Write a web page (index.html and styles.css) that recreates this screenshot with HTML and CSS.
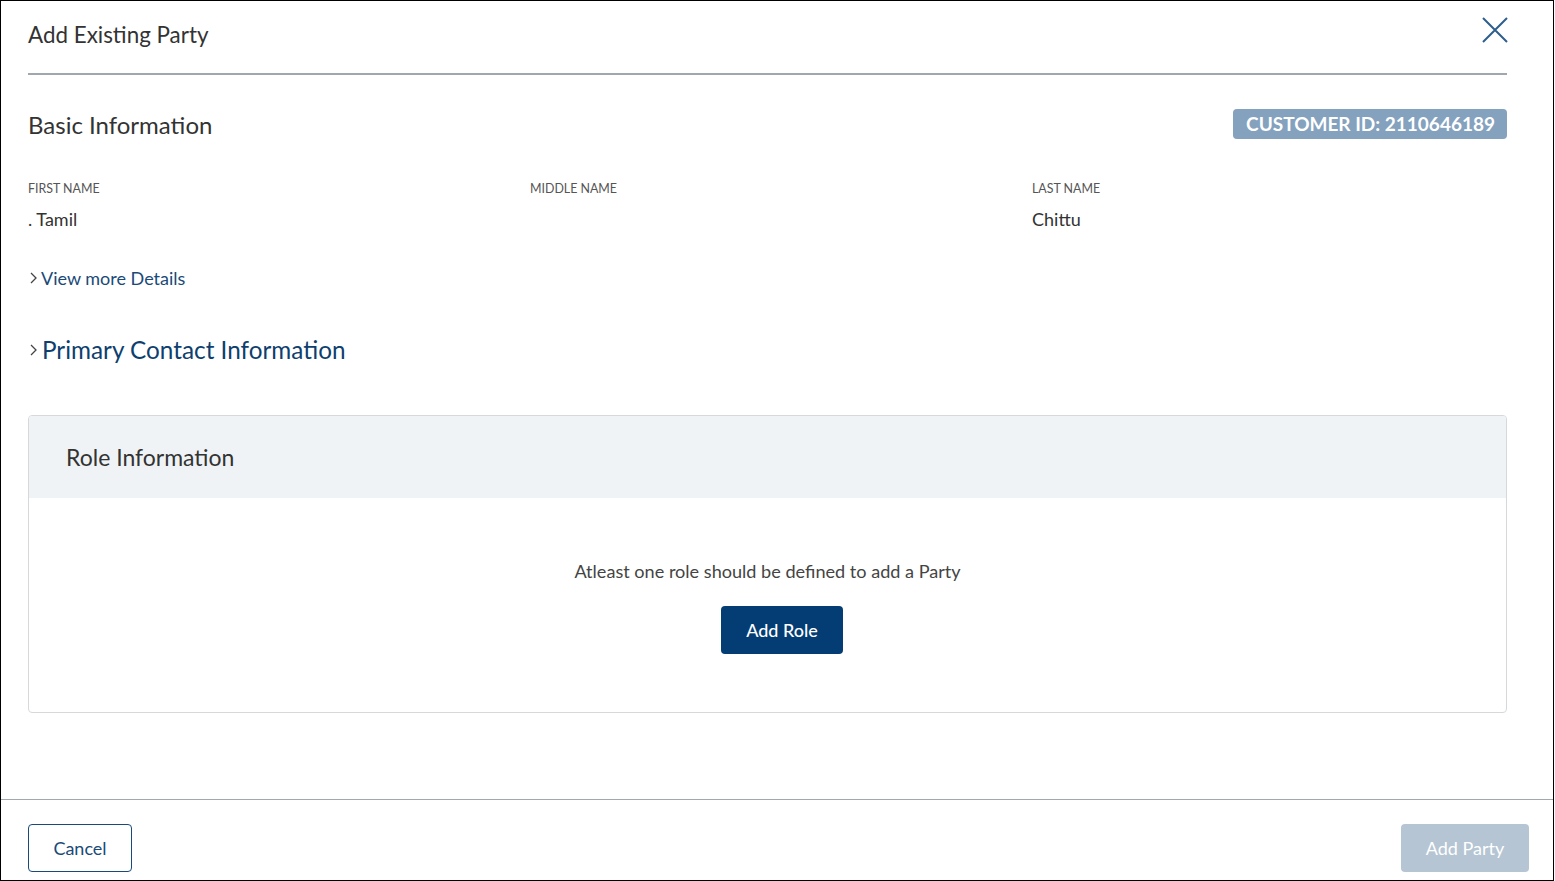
FILE: index.html
```html
<!DOCTYPE html>
<html>
<head>
<meta charset="utf-8">
<link rel="stylesheet" href="styles.css">
</head>
<body>
<div class="dialog">
  <div class="header">
    <h1 class="title">Add Existing Party</h1>
    <button class="close" aria-label="Close">
      <svg width="26" height="26" viewBox="0 0 26 26"><path d="M1 1 L25 25 M25 1 L1 25" stroke="#2d5e8c" stroke-width="2" fill="none"/></svg>
    </button>
  </div>
  <div class="content">
    <div class="section-head">
      <h2 class="section-title">Basic Information</h2>
      <span class="badge">CUSTOMER ID: 2110646189</span>
    </div>
    <div class="fields">
      <div class="field"><div class="label">FIRST NAME</div><div class="value">. Tamil</div></div>
      <div class="field"><div class="label">MIDDLE NAME</div><div class="value"></div></div>
      <div class="field"><div class="label">LAST NAME</div><div class="value">Chittu</div></div>
    </div>
    <a class="more"><svg class="chev" width="13" height="12" viewBox="0 0 13 12"><path d="M3 1 L8 6 L3 11" stroke="#444" stroke-width="1.3" fill="none"/></svg>View more Details</a>
    <a class="primary"><svg class="chev" width="14" height="12" viewBox="0 0 14 12"><path d="M3 1 L8 6 L3 11" stroke="#444" stroke-width="1.3" fill="none"/></svg>Primary Contact Information</a>
    <div class="role-box">
      <div class="role-head">Role Information</div>
      <div class="role-body">
        <p class="role-msg">Atleast one role should be defined to add a Party</p>
        <button class="btn-primary">Add Role</button>
      </div>
    </div>
  </div>
  <div class="footer">
    <button class="btn-outline">Cancel</button>
    <button class="btn-disabled">Add Party</button>
  </div>
</div>
</body>
</html>
```

FILE: styles.css
```css
* { box-sizing: border-box; }
html, body { margin: 0; padding: 0; }
body {
  font-family: Lato, "Open Sans", sans-serif;
  color: #333;
  background: #fff;
}
.dialog {
  width: 1554px;
  height: 881px;
  border: 1px solid #000;
  display: flex;
  flex-direction: column;
}
.header {
  margin: 0 46px 0 27px;
  height: 74px;
  border-bottom: 2px solid #9ea8ae;
  display: flex;
  align-items: flex-start;
  justify-content: space-between;
}
.title {
  margin: 20px 0 0 0;
  font-size: 22.4px;
  font-weight: 400;
  line-height: 28px;
  color: #333;
}
.close {
  margin-top: 16px;
  margin-right: -1px;
  padding: 0;
  border: 0;
  background: none;
  width: 26px;
  height: 26px;
}
.close svg { display: block; }
.content {
  flex: 1;
  padding: 0 46px 0 27px;
}
.section-head {
  margin-top: 34px;
  height: 30px;
  display: flex;
  align-items: center;
  justify-content: space-between;
}
.section-title {
  margin: 0;
  font-size: 24px;
  font-weight: 400;
  color: #333;
}
.badge {
  background: #84a1be;
  color: #fff;
  font-weight: 700;
  font-size: 19px;
  height: 30px;
  line-height: 30px;
  padding: 0 12px 0 13px;
  border-radius: 4px;
}
.fields {
  margin-top: 43px;
  display: grid;
  grid-template-columns: repeat(3, 1fr);
  column-gap: 27px;
}
.label {
  font-size: 12.4px;
  line-height: 14px;
  color: #555;
}
.value {
  margin-top: 12px;
  font-size: 18px;
  line-height: 22px;
  height: 22px;
  color: #333;
}
.more {
  display: flex;
  align-items: center;
  margin-top: 37px;
  font-size: 18px;
  line-height: 22px;
  color: #1a4a78;
}
.chev {
  display: block;
  flex: none;
}
.primary {
  display: flex;
  align-items: center;
  margin-top: 46px;
  font-size: 24.3px;
  line-height: 30px;
  color: #0e3f6e;
}
.role-box {
  margin-top: 50px;
  border: 1px solid #d6d9dc;
  border-radius: 4px;
  overflow: hidden;
}
.role-head {
  background: #f0f3f6;
  height: 82px;
  padding-left: 37px;
  font-size: 23px;
  display: flex;
  align-items: center;
  color: #333;
}
.role-body {
  height: 214px;
  padding-top: 62px;
  display: flex;
  flex-direction: column;
  align-items: center;
}
.role-msg {
  margin: 0;
  font-size: 18.1px;
  line-height: 22px;
  color: #444;
}
.btn-primary {
  margin-top: 24px;
  margin-left: 29px;
  width: 122px;
  height: 48px;
  background: #043c74;
  color: #fff;
  border: 0;
  border-radius: 4px;
  font-family: inherit;
  font-size: 18px;
  font-weight: 500;
}
.footer {
  height: 81px;
  border-top: 1px solid #a0aaad;
  padding: 24px 24px 0 27px;
  display: flex;
  justify-content: space-between;
  align-items: flex-start;
}
.btn-outline {
  width: 104px;
  height: 48px;
  background: #fff;
  border: 1px solid #1a4a78;
  border-radius: 4px;
  color: #1a4a78;
  font-family: inherit;
  font-size: 18px;
}
.btn-disabled {
  width: 128px;
  height: 48px;
  background: #b5c5d3;
  border: 0;
  border-radius: 4px;
  color: #fff;
  font-family: inherit;
  font-size: 18px;
}
```
